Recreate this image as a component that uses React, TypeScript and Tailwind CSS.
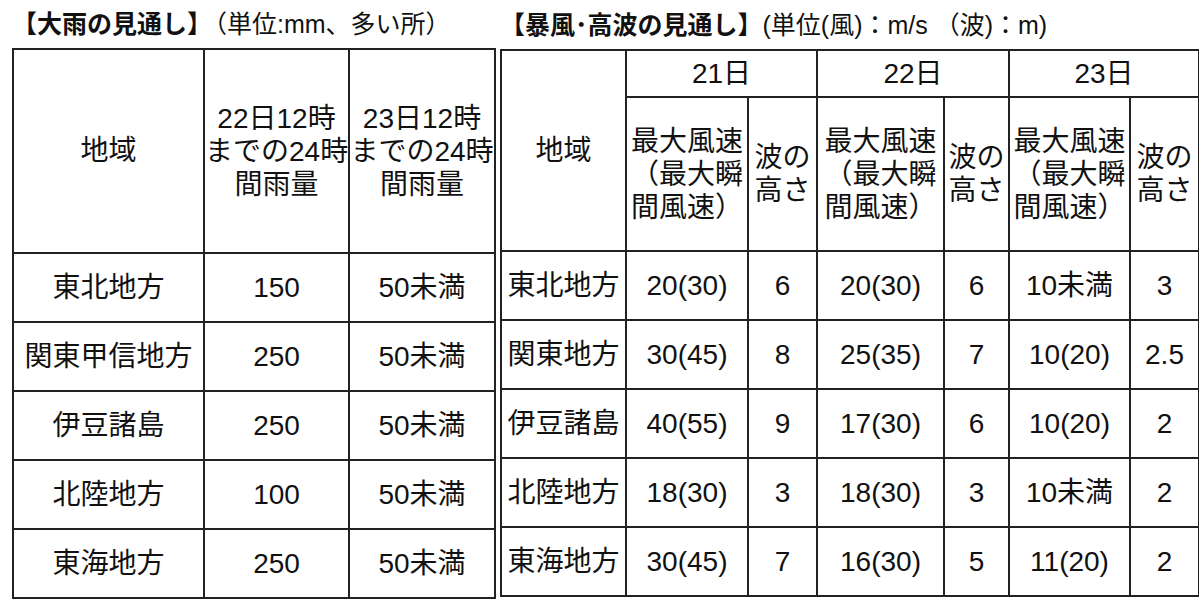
const font = { fontFamily: '"Liberation Sans", "Noto Sans CJK JP", sans-serif' };

const rainRows = [
  ['東北地方', '150', '50未満'],
  ['関東甲信地方', '250', '50未満'],
  ['伊豆諸島', '250', '50未満'],
  ['北陸地方', '100', '50未満'],
  ['東海地方', '250', '50未満'],
];

const windRows = [
  ['東北地方', '20(30)', '6', '20(30)', '6', '10未満', '3'],
  ['関東地方', '30(45)', '8', '25(35)', '7', '10(20)', '2.5'],
  ['伊豆諸島', '40(55)', '9', '17(30)', '6', '10(20)', '2'],
  ['北陸地方', '18(30)', '3', '18(30)', '3', '10未満', '2'],
  ['東海地方', '30(45)', '7', '16(30)', '5', '11(20)', '2'],
];

const cell = 'border-2 border-[#222] text-center align-middle p-0';

function WindHead() {
  return (
    <span className="block leading-[33px]">
      最大風速
      <br />
      （最大瞬
      <br />
      間風速）
    </span>
  );
}

function WaveHead() {
  return (
    <span className="block leading-[33px]">
      波の
      <br />
      高さ
    </span>
  );
}

export default function App() {
  return (
    <div className="w-[1199px] h-[600px] bg-white text-[#111] overflow-hidden" style={font}>
      <div className="flex pl-[12px] gap-[6px]">
        {/* 大雨 */}
        <div className="w-[482px] shrink-0">
          <div className="h-[48px] flex items-center text-[25px] whitespace-nowrap pt-[2px]">
            <span className="font-bold">【大雨の見通し】</span>
            <span className="ml-[-10px]">（単位:mm、多い所）</span>
          </div>
          <table className="table-fixed border-collapse w-[482px] text-[28px]">
            <colgroup>
              <col className="w-[191px]" />
              <col className="w-[145px]" />
              <col className="w-[146px]" />
            </colgroup>
            <tbody>
              <tr className="h-[204px]">
                <td className={cell}>地域</td>
                <td className={cell}>
                  <span className="block leading-[33px] whitespace-nowrap">
                    22日12時
                    <br />
                    までの24時
                    <br />
                    間雨量
                  </span>
                </td>
                <td className={cell}>
                  <span className="block leading-[33px] whitespace-nowrap">
                    23日12時
                    <br />
                    までの24時
                    <br />
                    間雨量
                  </span>
                </td>
              </tr>
              {rainRows.map((r) => (
                <tr key={r[0]} className="h-[69px]">
                  {r.map((c, i) => (
                    <td key={i} className={cell + ' whitespace-nowrap'}>
                      {c}
                    </td>
                  ))}
                </tr>
              ))}
            </tbody>
          </table>
        </div>

        {/* 暴風・高波 */}
        <div className="w-[698px] shrink-0">
          <div className="h-[49px] flex items-center text-[25px] whitespace-nowrap pt-[2px]">
            <span className="font-bold">【暴風･高波の見通し】</span>
            <span>(単位(風)：m/s （波)：m)</span>
          </div>
          <table className="table-fixed border-collapse w-[698px] text-[28px]">
            <colgroup>
              <col className="w-[125px]" />
              <col className="w-[122px]" />
              <col className="w-[69px]" />
              <col className="w-[127px]" />
              <col className="w-[65px]" />
              <col className="w-[121px]" />
              <col className="w-[69px]" />
            </colgroup>
            <tbody>
              <tr className="h-[47px]">
                <td rowSpan={2} className={cell}>
                  地域
                </td>
                <td colSpan={2} className={cell}>21日</td>
                <td colSpan={2} className={cell}>22日</td>
                <td colSpan={2} className={cell}>23日</td>
              </tr>
              <tr className="h-[154px]">
                <td className={cell}><WindHead /></td>
                <td className={cell}><WaveHead /></td>
                <td className={cell}><WindHead /></td>
                <td className={cell}><WaveHead /></td>
                <td className={cell}><WindHead /></td>
                <td className={cell}><WaveHead /></td>
              </tr>
              {windRows.map((r) => (
                <tr key={r[0]} className="h-[69px]">
                  {r.map((c, i) => (
                    <td key={i} className={cell + ' whitespace-nowrap'}>
                      {c}
                    </td>
                  ))}
                </tr>
              ))}
            </tbody>
          </table>
        </div>
      </div>
    </div>
  );
}
